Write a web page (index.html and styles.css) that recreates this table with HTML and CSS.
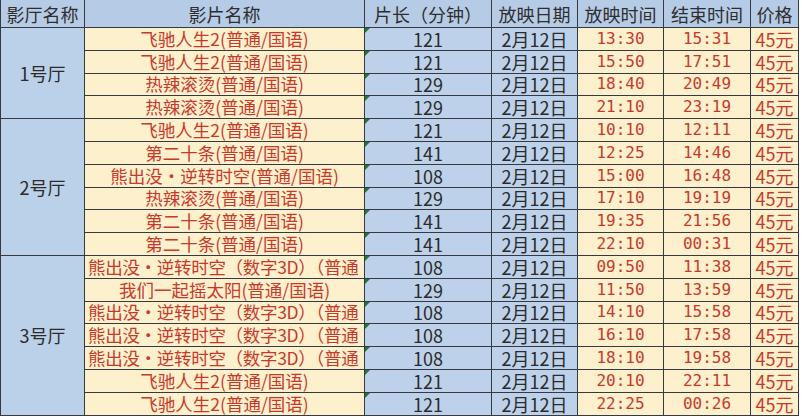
FILE: index.html
```html
<!DOCTYPE html>
<html lang="zh-CN">
<head>
<meta charset="utf-8">
<title>排片表</title>
<link rel="stylesheet" href="styles.css">
</head>
<body>
<table class="sched">
  <colgroup>
    <col class="c-hall"><col class="c-film"><col class="c-len"><col class="c-date"><col class="c-time"><col class="c-time2"><col class="c-price">
  </colgroup>
  <thead>
    <tr class="head">
      <th>影厅名称</th><th>影片名称</th><th>片长（分钟）</th><th>放映日期</th><th>放映时间</th><th>结束时间</th><th>价格</th>
    </tr>
  </thead>
  <tbody>
    <tr><td class="hall" rowspan="4">1号厅</td><td class="film">飞驰人生2(普通/国语)</td><td class="len">121</td><td class="date">2月12日</td><td class="time">13:30</td><td class="time">15:31</td><td class="price">45元</td></tr>
    <tr><td class="film">飞驰人生2(普通/国语)</td><td class="len">121</td><td class="date">2月12日</td><td class="time">15:50</td><td class="time">17:51</td><td class="price">45元</td></tr>
    <tr><td class="film">热辣滚烫(普通/国语)</td><td class="len">129</td><td class="date">2月12日</td><td class="time">18:40</td><td class="time">20:49</td><td class="price">45元</td></tr>
    <tr><td class="film">热辣滚烫(普通/国语)</td><td class="len">129</td><td class="date">2月12日</td><td class="time">21:10</td><td class="time">23:19</td><td class="price">45元</td></tr>

    <tr><td class="hall" rowspan="6">2号厅</td><td class="film">飞驰人生2(普通/国语)</td><td class="len">121</td><td class="date">2月12日</td><td class="time">10:10</td><td class="time">12:11</td><td class="price">45元</td></tr>
    <tr><td class="film">第二十条(普通/国语)</td><td class="len">141</td><td class="date">2月12日</td><td class="time">12:25</td><td class="time">14:46</td><td class="price">45元</td></tr>
    <tr><td class="film">熊出没·逆转时空(普通/国语)</td><td class="len">108</td><td class="date">2月12日</td><td class="time">15:00</td><td class="time">16:48</td><td class="price">45元</td></tr>
    <tr><td class="film">热辣滚烫(普通/国语)</td><td class="len">129</td><td class="date">2月12日</td><td class="time">17:10</td><td class="time">19:19</td><td class="price">45元</td></tr>
    <tr><td class="film">第二十条(普通/国语)</td><td class="len">141</td><td class="date">2月12日</td><td class="time">19:35</td><td class="time">21:56</td><td class="price">45元</td></tr>
    <tr><td class="film">第二十条(普通/国语)</td><td class="len">141</td><td class="date">2月12日</td><td class="time">22:10</td><td class="time">00:31</td><td class="price">45元</td></tr>

    <tr><td class="hall" rowspan="7">3号厅</td><td class="film long"><span>熊出没·逆转时空（数字3D）（普通</span></td><td class="len">108</td><td class="date">2月12日</td><td class="time">09:50</td><td class="time">11:38</td><td class="price">45元</td></tr>
    <tr><td class="film">我们一起摇太阳(普通/国语)</td><td class="len">129</td><td class="date">2月12日</td><td class="time">11:50</td><td class="time">13:59</td><td class="price">45元</td></tr>
    <tr><td class="film long"><span>熊出没·逆转时空（数字3D）（普通</span></td><td class="len">108</td><td class="date">2月12日</td><td class="time">14:10</td><td class="time">15:58</td><td class="price">45元</td></tr>
    <tr><td class="film long"><span>熊出没·逆转时空（数字3D）（普通</span></td><td class="len">108</td><td class="date">2月12日</td><td class="time">16:10</td><td class="time">17:58</td><td class="price">45元</td></tr>
    <tr><td class="film long"><span>熊出没·逆转时空（数字3D）（普通</span></td><td class="len">108</td><td class="date">2月12日</td><td class="time">18:10</td><td class="time">19:58</td><td class="price">45元</td></tr>
    <tr><td class="film">飞驰人生2(普通/国语)</td><td class="len">121</td><td class="date">2月12日</td><td class="time">20:10</td><td class="time">22:11</td><td class="price">45元</td></tr>
    <tr><td class="film">飞驰人生2(普通/国语)</td><td class="len">121</td><td class="date">2月12日</td><td class="time">22:25</td><td class="time">00:26</td><td class="price">45元</td></tr>
  </tbody>
</table>
</body>
</html>
```

FILE: styles.css
```css
html, body {
  margin: 0;
  padding: 0;
  background: #ffffff;
}

.sched {
  border-collapse: collapse;
  table-layout: fixed;
  width: 799px;
  font-family: "Noto Sans CJK SC", "Noto Sans", sans-serif;
  font-size: 18px;
  color: #2b2b2b;
}

.c-hall { width: 84px; }
.c-film { width: 280px; }
.c-len { width: 127px; }
.c-date { width: 86px; }
.c-time { width: 86px; }
.c-time2 { width: 87px; }
.c-price { width: 48px; }

.sched th,
.sched td {
  border: 1px solid #36393f;
  padding: 0;
  text-align: center;
  vertical-align: middle;
  white-space: nowrap;
  line-height: 18px;
}

.head th {
  height: 27px;
  border-top: none;
  background: #b6cbe5;
  font-weight: normal;
  color: #2e2e2e;
  font-size: 18px;
}

.sched tbody tr {
  height: 22.8px;
}

.hall {
  background: #bbd0e9;
  color: #2b2b2b;
}

.film {
  background: #fdf0cd;
  color: #c63a2c;
  font-size: 17.5px;
}

.film.long {
  text-align: left;
  padding-left: 3px;
  overflow: hidden;
}

.film.long span {
  letter-spacing: -0.3px;
}

.len {
  position: relative;
  background: #bdd2ea;
  color: #2b2b2b;
}

.len::before {
  content: "";
  position: absolute;
  left: 0;
  top: 0;
  border-top: 5px solid #1f7a30;
  border-right: 5px solid transparent;
}

.date {
  background: #bdd2ea;
  color: #2b2b2b;
}

.time {
  background: #fdf0cd;
  color: #c63a2c;
  font-family: "DejaVu Sans Mono", "Liberation Mono", monospace;
  font-size: 16px;
}

.price {
  background: #fdf0cd;
  color: #c63a2c;
}
```
